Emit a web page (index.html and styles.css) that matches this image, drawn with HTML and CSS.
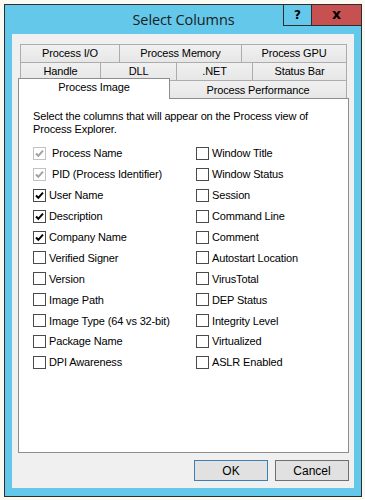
FILE: index.html
```html
<!DOCTYPE html>
<html lang="en">
<head>
    <meta charset="UTF-8">
    <meta name="viewport" content="width=device-width, initial-scale=1.0">
    <title>Select Columns</title>
    <link rel="stylesheet" href="styles.css">
</head>
<body>

    <div class="window">
        <div class="titlebar">
            <span class="title">Select Columns</span>
            <div class="caption">
                <span class="cap help">?</span>
                <span class="cap close">x</span>
            </div>
        </div>

        <div class="client">
            <div class="tab-row row1">
                <div class="tab">Process I/O</div>
                <div class="tab">Process Memory</div>
                <div class="tab last">Process GPU</div>
            </div>
            <div class="tab-row row2">
                <div class="tab">Handle</div>
                <div class="tab">DLL</div>
                <div class="tab">.NET</div>
                <div class="tab last">Status Bar</div>
            </div>
            <div class="tab-row row3">
                <div class="tab selected">Process Image</div>
                <div class="tab last perf">Process Performance</div>
            </div>

            <div class="panel">
                <p class="intro">Select the columns that will appear on the Process view of Process Explorer.</p>
                <div class="columns">
                    <div class="col">
                        <div class="check disabled on"><span class="box"><svg viewBox="0 0 11 11"><polyline points="2,5.5 4.3,7.8 9,2.6"/></svg></span><span class="label">Process Name</span></div>
                        <div class="check disabled on"><span class="box"><svg viewBox="0 0 11 11"><polyline points="2,5.5 4.3,7.8 9,2.6"/></svg></span><span class="label">PID (Process Identifier)</span></div>
                        <div class="check on"><span class="box"><svg viewBox="0 0 11 11"><polyline points="2,5.5 4.3,7.8 9,2.6"/></svg></span><span class="label">User Name</span></div>
                        <div class="check on"><span class="box"><svg viewBox="0 0 11 11"><polyline points="2,5.5 4.3,7.8 9,2.6"/></svg></span><span class="label">Description</span></div>
                        <div class="check on"><span class="box"><svg viewBox="0 0 11 11"><polyline points="2,5.5 4.3,7.8 9,2.6"/></svg></span><span class="label">Company Name</span></div>
                        <div class="check"><span class="box"></span><span class="label">Verified Signer</span></div>
                        <div class="check"><span class="box"></span><span class="label">Version</span></div>
                        <div class="check"><span class="box"></span><span class="label">Image Path</span></div>
                        <div class="check"><span class="box"></span><span class="label">Image Type (64 vs 32-bit)</span></div>
                        <div class="check"><span class="box"></span><span class="label">Package Name</span></div>
                        <div class="check"><span class="box"></span><span class="label">DPI Awareness</span></div>
                    </div>
                    <div class="col">
                        <div class="check"><span class="box"></span><span class="label">Window Title</span></div>
                        <div class="check"><span class="box"></span><span class="label">Window Status</span></div>
                        <div class="check"><span class="box"></span><span class="label">Session</span></div>
                        <div class="check"><span class="box"></span><span class="label">Command Line</span></div>
                        <div class="check"><span class="box"></span><span class="label">Comment</span></div>
                        <div class="check"><span class="box"></span><span class="label">Autostart Location</span></div>
                        <div class="check"><span class="box"></span><span class="label">VirusTotal</span></div>
                        <div class="check"><span class="box"></span><span class="label">DEP Status</span></div>
                        <div class="check"><span class="box"></span><span class="label">Integrity Level</span></div>
                        <div class="check"><span class="box"></span><span class="label">Virtualized</span></div>
                        <div class="check"><span class="box"></span><span class="label">ASLR Enabled</span></div>
                    </div>
                </div>
            </div>

            <div class="buttons">
                <button class="btn default">OK</button>
                <button class="btn">Cancel</button>
            </div>
        </div>
    </div>

</body>
</html>
```

FILE: styles.css
```css
body {
    margin: 0;
    background: #fafaf2;
    font-family: "Liberation Sans", Arial, sans-serif;
    font-size: 11px;
    letter-spacing: -0.15px;
    color: #000;
}

.window {
    width: 358px;
    height: 493px;
    margin: 4px 0 0 4px;
    box-sizing: border-box;
    border: 1px solid #2e2e2e;
    background: #63c8ea;
}

/* title bar */

.titlebar {
    height: 29px;
    display: grid;
    grid-template-columns: 1fr auto 1fr;
    align-items: center;
}

.title {
    grid-column: 2;
    font-family: "Open Sans", "Noto Sans", sans-serif;
    font-size: 14.5px;
    letter-spacing: -0.1px;
    color: #1c1c1c;
    padding-left: 1px;
}

.caption {
    grid-column: 3;
    justify-self: end;
    align-self: start;
    display: flex;
    margin-top: -1px;
    margin-right: -1px;
}

.cap {
    height: 22px;
    box-sizing: border-box;
    border: 1px solid #2e2e2e;
    display: flex;
    align-items: center;
    justify-content: center;
    font-weight: bold;
    font-family: "DejaVu Sans", sans-serif;
    font-size: 12px;
}

.help {
    width: 29px;
    background: #63c8ea;
}

.close {
    width: 51px;
    margin-left: -1px;
    background: #c75050;
    font-size: 14px;
    padding-bottom: 2px;
}

/* client area */

.client {
    height: 454px;
    margin: 0 7px 0 7px;
    background: #f0f0f0;
    padding-top: 10px;
    box-sizing: border-box;
}

.tab-row {
    display: grid;
    margin-left: 8px;
    height: 18px;
}

.row1 {
    grid-template-columns: 99px 122px 106px;
}

.row2 {
    grid-template-columns: 80px 76px 76px 95px;
}

.tab {
    box-sizing: border-box;
    border: 1px solid #acacac;
    border-right: none;
    border-bottom: none;
    background: linear-gradient(#f0f0f0, #e7e7e7);
    text-align: center;
    line-height: 17px;
    white-space: nowrap;
}

.tab.last {
    border-right: 1px solid #acacac;
}

.row3 {
    display: flex;
    align-items: flex-end;
    margin-left: 6px;
    margin-top: -2px;
    height: 20px;
}

.tab.selected {
    width: 152px;
    height: 21px;
    margin-bottom: -1px;
    border-color: #8d8d8d;
    border-right: 1px solid #8d8d8d;
    background: #fff;
    line-height: 16px;
    position: relative;
    z-index: 1;
}

.tab.perf {
    width: 177px;
    height: 18px;
    border-left: none;
    line-height: 19px;
}

.panel {
    width: 331px;
    height: 355px;
    margin-left: 6px;
    box-sizing: border-box;
    border: 1px solid #8d8d8d;
    background: #fff;
    padding: 11px 14px 0 14px;
}

.intro {
    margin: 0;
    line-height: 13px;
    width: 290px;
}

.columns {
    display: grid;
    grid-template-columns: 163px 1fr;
    margin-top: 7px;
}

.check {
    height: 20.9px;
    display: flex;
    align-items: center;
}

.box {
    width: 13px;
    height: 13px;
    box-sizing: border-box;
    border: 1px solid #4a4a4a;
    background: #fff;
    flex: none;
}

.box svg {
    display: block;
    width: 11px;
    height: 11px;
}

.box polyline {
    fill: none;
    stroke: #000;
    stroke-width: 2;
}

.check.disabled .box {
    border-color: #c2c2c2;
}

.check.disabled polyline {
    stroke: #a2a2a2;
}

.label {
    margin-left: 3px;
}

.check.disabled .label {
    margin-left: 6px;
}

.buttons {
    display: flex;
    justify-content: flex-end;
    gap: 7px;
    margin-top: 7px;
    margin-right: 5px;
}

.btn {
    width: 74px;
    height: 21px;
    box-sizing: border-box;
    border: 1px solid #707070;
    background: #e1e1e1;
    font-family: "Liberation Sans", Arial, sans-serif;
    font-size: 12px;
    color: #000;
    padding: 0;
}

.btn.default {
    border-color: #3c7fb1;
}
```
